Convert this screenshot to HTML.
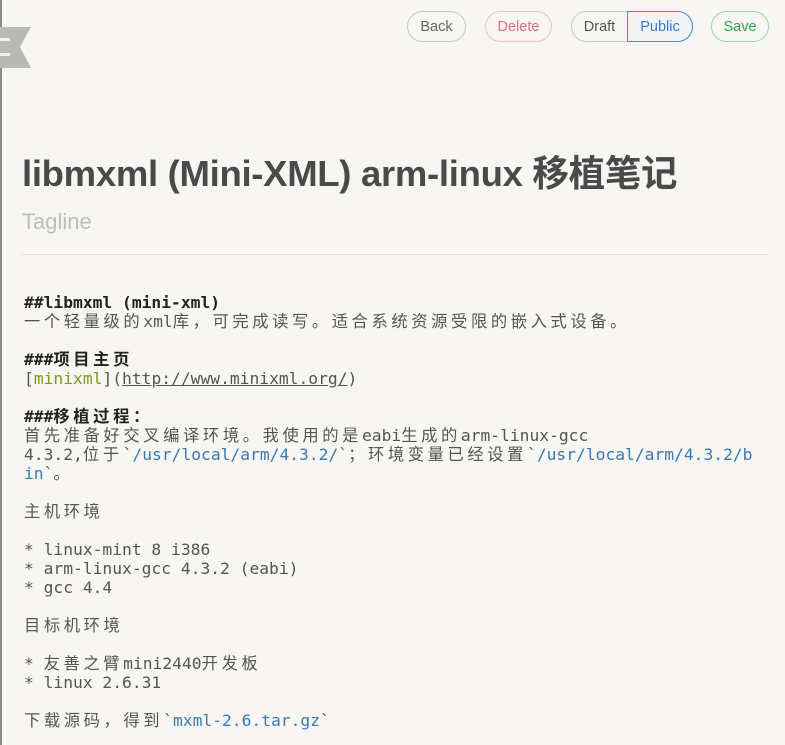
<!DOCTYPE html>
<html><head><meta charset="utf-8"><style>
html,body{margin:0;padding:0;}
body{width:785px;height:745px;background:#f7f6f2;position:relative;overflow:hidden;font-family:"Liberation Sans","Noto Sans CJK SC",sans-serif;}
.lb{position:absolute;left:0;top:0;width:2px;height:745px;background:#8a8a8a;}
.btn{position:absolute;top:11px;height:31px;border-radius:16px;box-sizing:border-box;font-size:14.5px;line-height:31px;padding-top:2px;text-align:center;background:#f7f6f2;}
h1{position:absolute;left:22px;top:144px;margin:0;font-size:36.5px;font-weight:bold;color:#4a4a4a;letter-spacing:-0.3px;white-space:nowrap;}
.tag{position:absolute;left:22px;top:209px;font-size:22px;color:#bdbdbd;}
.hr{position:absolute;left:22px;top:254px;width:745px;height:1px;background:#e2e1dc;}
pre{position:absolute;left:24px;top:293px;margin:0;font-family:"DejaVu Sans Mono","Noto Sans CJK SC",monospace;font-size:16.3px;line-height:19px;color:#555;}
pre b{color:#222;}
.c{letter-spacing:3.6px;}
.g{color:#7a9a1a;}
.u{text-decoration:underline;}
.k{color:#3a78b5;}
</style></head><body>
<div class="lb"></div>
<svg style="position:absolute;left:0;top:27px" width="32" height="42"><polygon points="0,0 31,0 20,20 31,41 0,41" fill="#b9b9b7"/><rect x="0" y="11" width="10" height="3" fill="#f0f0ee"/><rect x="0" y="26" width="10" height="3" fill="#f0f0ee"/></svg>
<div class="btn" style="left:407px;width:59px;border:1px solid #c8c8c8;color:#666;line-height:27px">Back</div>
<div class="btn" style="left:485px;width:67px;border:1px solid #f0c0c4;color:#e0707a;line-height:27px">Delete</div>
<div class="btn" style="left:571px;width:122px;border:1px solid #c8c8c8;"></div>
<div class="btn" style="left:571px;width:57px;color:#555;border:none;background:transparent;line-height:29px">Draft</div>
<div class="btn" style="left:627px;width:66px;border:1px solid #4a8ad0;color:#3a78c5;border-radius:0 16px 16px 0;background:#f2f4f7;line-height:27px">Public</div>
<div class="btn" style="left:711px;width:58px;border:1px solid #9ad8a4;color:#2aa84a;line-height:27px">Save</div>
<h1>libmxml (Mini-XML) arm-linux 移植笔记</h1>
<div class="tag">Tagline</div>
<div class="hr"></div>
<pre><b>##libmxml (mini-xml)</b>
<span class="c">一个轻量级的</span>xml<span class="c">库，可完成读写。适合系统资源受限的嵌入式设备。</span>

<b>###<span class="c">项目主页</span></b>
[<span class="g">minixml</span>](<span class="u">http://www.minixml.org/</span>)

<b>###<span class="c">移植过程：</span></b>
<span class="c">首先准备好交叉编译环境。我使用的是</span>eabi<span class="c">生成的</span>arm-linux-gcc
4.3.2,<span class="c">位于</span>`<span class="k">/usr/local/arm/4.3.2/</span>`<span class="c">；环境变量已经设置</span>`<span class="k">/usr/local/arm/4.3.2/b</span>
<span class="k">in</span>`<span class="c">。</span>

<span class="c">主机环境</span>

* linux-mint 8 i386
* arm-linux-gcc 4.3.2 (eabi)
* gcc 4.4

<span class="c">目标机环境</span>

* <span class="c">友善之臂</span>mini2440<span class="c">开发板</span>
* linux 2.6.31

<span class="c">下载源码，得到</span>`<span class="k">mxml-2.6.tar.gz</span>`</pre>
</body></html>
